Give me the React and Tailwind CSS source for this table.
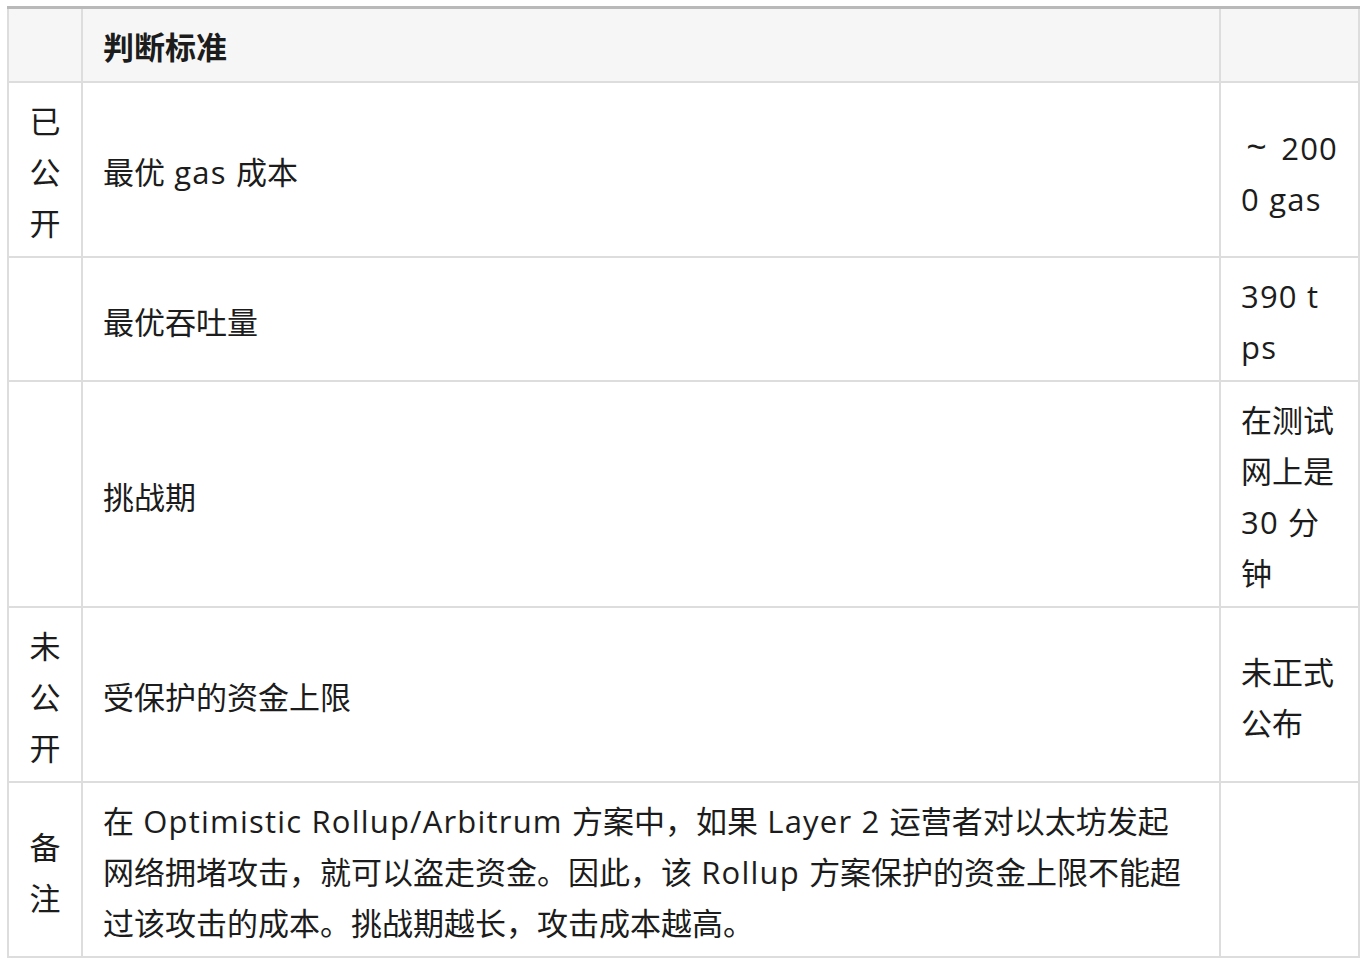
import React from "react";

const Txt = ({ children }) => {
  const parts = String(children).split(/([\x20-\x7E]+)/);
  return parts.map((p, i) =>
    /[\x20-\x7E]/.test(p) ? (
      <span key={i} className="tracking-[1.2px]">
        {p}
      </span>
    ) : (
      <React.Fragment key={i}>{p}</React.Fragment>
    )
  );
};

const Lines = ({ lines }) =>
  lines.map((l, i) => (
    <div key={i} className="whitespace-nowrap">
      {typeof l === "string" ? <Txt>{l}</Txt> : l}
    </div>
  ));

const rows = [
  {
    side: ["已", "公", "开"],
    crit: ["最优 gas 成本"],
    value: [
      <>
        <span className="inline-block w-[31px] text-center text-[36px]">~</span>
        <Txt> 200</Txt>
      </>,
      "0 gas",
    ],
  },
  { side: [], crit: ["最优吞吐量"], value: ["390 t", "ps"] },
  { side: [], crit: ["挑战期"], value: ["在测试", "网上是", "30 分", "钟"] },
  { side: ["未", "公", "开"], crit: ["受保护的资金上限"], value: ["未正式", "公布"] },
  {
    side: ["备", "注"],
    crit: [
      "在 Optimistic Rollup/Arbitrum 方案中，如果 Layer 2 运营者对以太坊发起",
      "网络拥堵攻击，就可以盗走资金。因此，该 Rollup 方案保护的资金上限不能超",
      "过该攻击的成本。挑战期越长，攻击成本越高。",
    ],
    value: [],
  },
];

const cell = "border-2 border-[#dddddd] px-5 pt-[13px] pb-[7px] align-middle";
const head = "border-2 border-[#dddddd] border-t-[3px] border-t-[#b9b9b9] px-5 pt-[13px] pb-[8px] align-middle";

export default function App() {
  return (
    <div
      className="min-h-screen bg-white pt-[6px] pl-[7px] text-[31px] leading-[51px] text-[#1c1c1c]"
      style={{ fontFamily: '"Open Sans", "Noto Sans CJK SC", sans-serif' }}
    >
      <table className="w-[1353px] table-fixed border-collapse">
        <colgroup>
          <col className="w-[74px]" />
          <col className="w-[1138px]" />
          <col className="w-[139px]" />
        </colgroup>
        <thead>
          <tr className="bg-[#f6f6f6]">
            <th className={head}></th>
            <th className={`${head} text-left font-bold`}>判断标准</th>
            <th className={head}></th>
          </tr>
        </thead>
        <tbody>
          {rows.map((r, i) => (
            <tr key={i}>
              <td className={`${cell} text-center`}>
                <Lines lines={r.side} />
              </td>
              <td className={cell}>
                <Lines lines={r.crit} />
              </td>
              <td className={cell}>
                <Lines lines={r.value} />
              </td>
            </tr>
          ))}
        </tbody>
      </table>
    </div>
  );
}
